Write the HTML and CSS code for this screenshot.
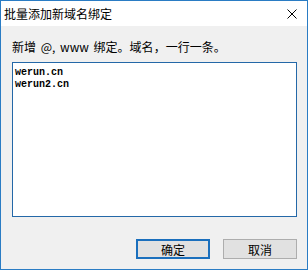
FILE: index.html
```html
<!DOCTYPE html>
<html>
<head>
<meta charset="utf-8">
<link rel="stylesheet" href="styles.css">
</head>
<body>
<div class="window">
  <div class="titlebar">
    <span class="title">批量添加新域名绑定</span>
    <svg class="close" width="10" height="10" viewBox="0 0 10 10"><path d="M0.5 0.5 L9.5 9.5 M9.5 0.5 L0.5 9.5" stroke="#000" stroke-width="1" fill="none"/></svg>
  </div>
  <div class="content">
    <div class="label">新增 @, www 绑定。域名，一行一条。</div>
    <div class="textbox">werun.cn<br>werun2.cn</div>
    <div class="buttons">
      <div class="btn default">确定</div>
      <div class="btn">取消</div>
    </div>
  </div>
</div>
</body>
</html>
```

FILE: styles.css
```css
html, body {
  margin: 0;
  padding: 0;
  background: #f0f0f0;
}
.window {
  box-sizing: border-box;
  width: 308px;
  height: 270px;
  border: 1px solid #2a7cc4;
  background: #f0f0f0;
  display: flex;
  flex-direction: column;
  font-family: "Noto Sans CJK SC", "Noto Sans", sans-serif;
  font-size: 12px;
  color: #000;
}
.titlebar {
  height: 25px;
  background: #fff;
  display: flex;
  align-items: center;
  justify-content: space-between;
  padding: 0 10px 0 3px;
}
.title {
  font-size: 12px;
  line-height: 16px;
}
.close {
  display: block;
}
.content {
  flex: 1;
  display: flex;
  flex-direction: column;
  padding: 13px 10px 0 11px;
}
.label {
  line-height: 16px;
  height: 16px;
  margin-bottom: 7px;
  word-spacing: 2px;
}
.textbox {
  box-sizing: border-box;
  height: 155px;
  border: 1px solid #2468a8;
  background: #fff;
  font-family: "Liberation Mono", monospace;
  font-size: 10px;
  font-weight: bold;
  line-height: 12px;
  padding: 4px 2px;
}
.buttons {
  display: flex;
  justify-content: flex-end;
  gap: 13px;
  margin-top: 22px;
}
.btn {
  box-sizing: border-box;
  width: 74px;
  height: 20px;
  border: 1px solid #adadad;
  background: #e1e1e1;
  display: flex;
  align-items: center;
  justify-content: center;
  font-size: 12px;
}
.btn.default {
  border: 2px solid #1a6fbd;
}
```
